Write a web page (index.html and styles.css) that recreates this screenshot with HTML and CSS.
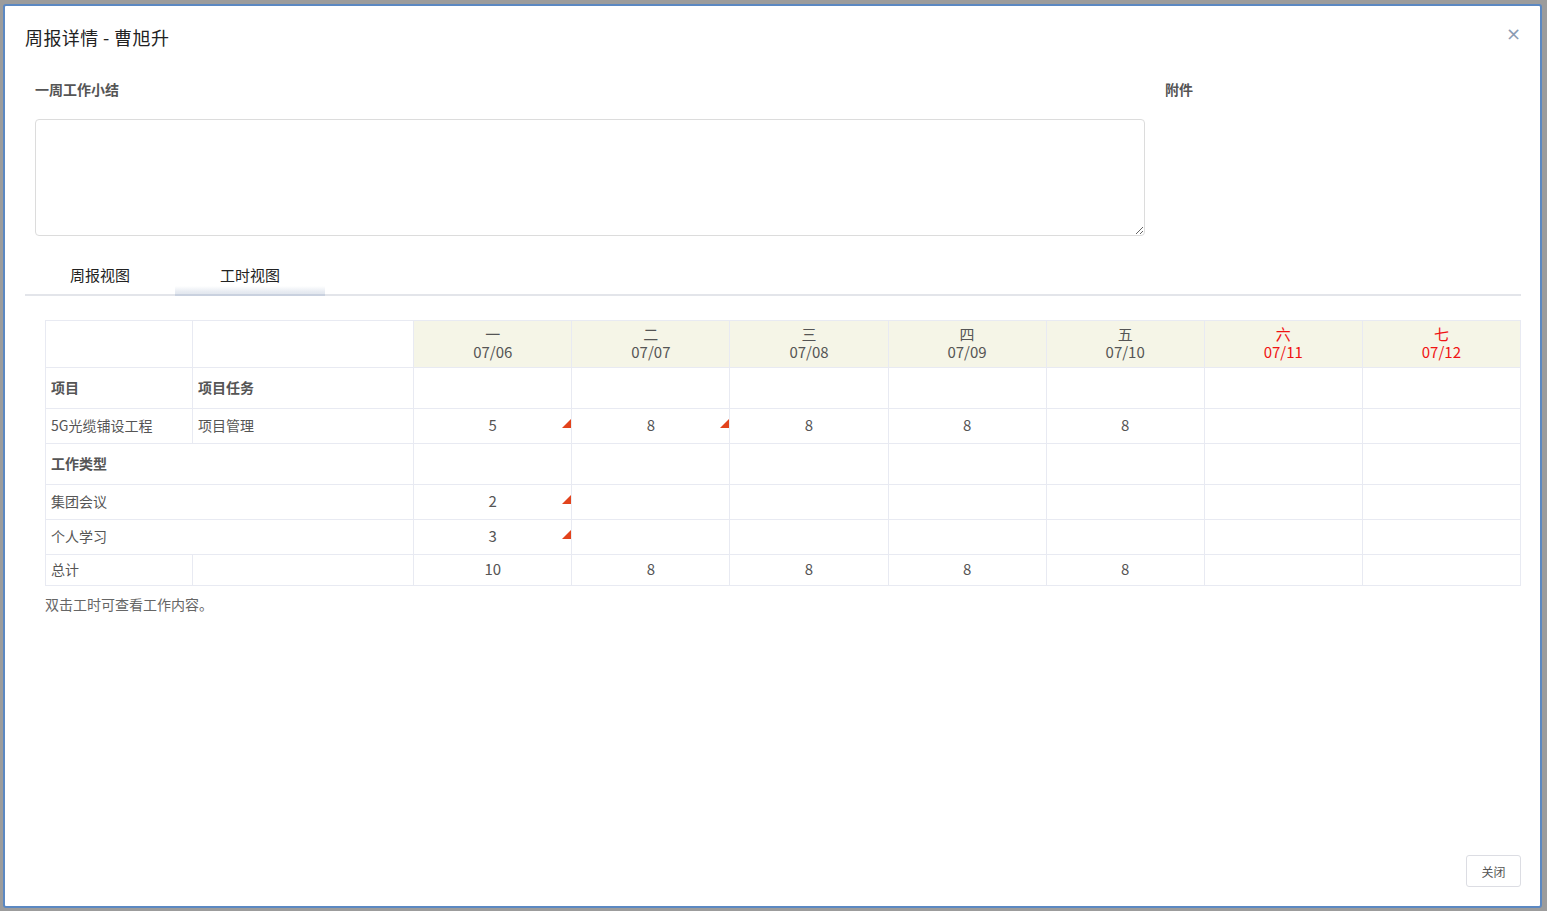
FILE: index.html
```html
<!DOCTYPE html>
<html lang="zh-CN">
<head>
    <meta charset="UTF-8">
    <meta name="viewport" content="width=device-width, initial-scale=1.0">
    <title>周报详情</title>
    <link rel="stylesheet" href="styles.css">
</head>
<body>
    <div class="dialog">
        <div class="dialog-header">
            <span class="dialog-title">周报详情 - 曹旭升</span>
            <span class="dialog-close">&times;</span>
        </div>

        <div class="dialog-body">
            <div class="summary">
                <div class="summary-main">
                    <div class="field-label">一周工作小结</div>
                    <textarea class="summary-text"></textarea>
                </div>
                <div class="summary-files">
                    <div class="field-label">附件</div>
                </div>
            </div>

            <div class="tabs">
                <div class="tab">周报视图</div>
                <div class="tab active">工时视图</div>
            </div>

            <div class="tab-pane">
                <table class="hours">
                    <colgroup>
                        <col class="col-project">
                        <col class="col-task">
                        <col class="col-day"><col class="col-day"><col class="col-day"><col class="col-day">
                        <col class="col-day"><col class="col-day"><col class="col-day">
                    </colgroup>
                    <tr class="row-head">
                        <td></td>
                        <td></td>
                        <th>一<br>07/06</th>
                        <th>二<br>07/07</th>
                        <th>三<br>07/08</th>
                        <th>四<br>07/09</th>
                        <th>五<br>07/10</th>
                        <th class="weekend">六<br>07/11</th>
                        <th class="weekend">七<br>07/12</th>
                    </tr>
                    <tr class="row-group">
                        <td class="label">项目</td>
                        <td class="label">项目任务</td>
                        <td></td><td></td><td></td><td></td><td></td><td></td><td></td>
                    </tr>
                    <tr class="row-item">
                        <td class="name">5G光缆铺设工程</td>
                        <td class="name">项目管理</td>
                        <td class="num">5<span class="flag"></span></td>
                        <td class="num">8<span class="flag"></span></td>
                        <td class="num">8</td>
                        <td class="num">8</td>
                        <td class="num">8</td>
                        <td></td><td></td>
                    </tr>
                    <tr class="row-group">
                        <td class="label" colspan="2">工作类型</td>
                        <td></td><td></td><td></td><td></td><td></td><td></td><td></td>
                    </tr>
                    <tr class="row-item">
                        <td class="name" colspan="2">集团会议</td>
                        <td class="num">2<span class="flag"></span></td>
                        <td></td><td></td><td></td><td></td><td></td><td></td>
                    </tr>
                    <tr class="row-item">
                        <td class="name" colspan="2">个人学习</td>
                        <td class="num">3<span class="flag"></span></td>
                        <td></td><td></td><td></td><td></td><td></td><td></td>
                    </tr>
                    <tr class="row-total">
                        <td class="name">总计</td>
                        <td></td>
                        <td class="num">10</td>
                        <td class="num">8</td>
                        <td class="num">8</td>
                        <td class="num">8</td>
                        <td class="num">8</td>
                        <td></td><td></td>
                    </tr>
                </table>
                <p class="hint">双击工时可查看工作内容。</p>
            </div>
        </div>

        <div class="dialog-footer">
            <button class="btn">关闭</button>
        </div>
    </div>
</body>
</html>
```

FILE: styles.css
```css
body {
    margin: 0;
    background: #9c9c9c;
    font-family: "Noto Sans CJK SC", "Noto Sans", sans-serif;
    color: #555;
}

.dialog {
    box-sizing: border-box;
    width: 1539px;
    height: 904px;
    margin: 4px 0 0 3px;
    background: #fff;
    border: 2px solid #5b88c2;
    border-radius: 3px;
    display: flex;
    flex-direction: column;
}

.dialog-header {
    height: 64px;
    padding: 0 20px;
    display: flex;
    align-items: center;
    justify-content: space-between;
}

.dialog-title {
    font-size: 18px;
    letter-spacing: 0.4px;
    color: #222;
    margin-bottom: 3px;
}

.dialog-close {
    font-family: "DejaVu Sans", sans-serif;
    font-size: 18px;
    color: #8a9bb3;
    margin: -9px -1px 0 0;
    cursor: pointer;
}

.dialog-body {
    padding: 0 19px 0 20px;
}

.summary {
    display: flex;
    gap: 20px;
    padding-left: 10px;
}

.summary-main {
    width: 1110px;
}

.summary-files {
    flex: 1;
}

.field-label {
    margin-top: 9px;
    height: 20px;
    line-height: 20px;
    font-size: 14px;
    font-weight: bold;
    color: #555;
}

.summary-text {
    display: block;
    box-sizing: border-box;
    width: 1110px;
    height: 117px;
    margin-top: 20px;
    border: 1px solid #dcdcdc;
    border-radius: 4px;
    resize: vertical;
}

.tabs {
    display: flex;
    margin-top: 20px;
    border-bottom: 2px solid #e3e5ea;
}

.tab {
    width: 150px;
    height: 38px;
    line-height: 37px;
    text-align: center;
    font-size: 15px;
    color: #222;
    margin-bottom: -2px;
}

.tab.active {
    border-bottom: 2px solid #c9d1df;
    background: linear-gradient(to bottom, #fff 0, #fff 30px, #e6eaf1 36px, #dfe4ec 40px);
}

.tab-pane {
    padding: 24px 0 0 20px;
}

.hours {
    border-collapse: collapse;
    width: 1476px;
    table-layout: fixed;
    font-size: 14px;
    color: #555;
}

.col-project { width: 147px; }
.col-task { width: 221px; }
.col-day { width: 158px; }

.hours td,
.hours th {
    border: 1px solid #e8eaf2;
    padding: 0 5px 3px;
    position: relative;
}

.row-head { height: 47px; }
.row-group { height: 41px; }
.row-item { height: 35px; }
.row-total { height: 31px; }

.hours th {
    background: #f5f5e7;
    font-weight: normal;
    font-size: 15px;
    line-height: 18px;
    text-align: center;
    padding-top: 0;
    padding-bottom: 2px;
}

.hours th.weekend {
    color: #f01313;
}

.label {
    font-weight: bold;
}

.num {
    text-align: center;
    font-size: 15px;
}

.flag {
    position: absolute;
    top: 10px;
    right: 0;
    width: 0;
    height: 0;
    border-left: 9px solid transparent;
    border-bottom: 9px solid #e2431c;
}

.hint {
    margin: 8px 0 0;
    font-size: 14px;
    color: #666;
}

.dialog-footer {
    margin-top: auto;
    padding: 0 19px 19px;
    display: flex;
    justify-content: flex-end;
}

.btn {
    width: 55px;
    height: 32px;
    background: #fff;
    border: 1px solid #dcdde3;
    border-radius: 3px;
    font-family: inherit;
    font-size: 12px;
    color: #555;
}
```
